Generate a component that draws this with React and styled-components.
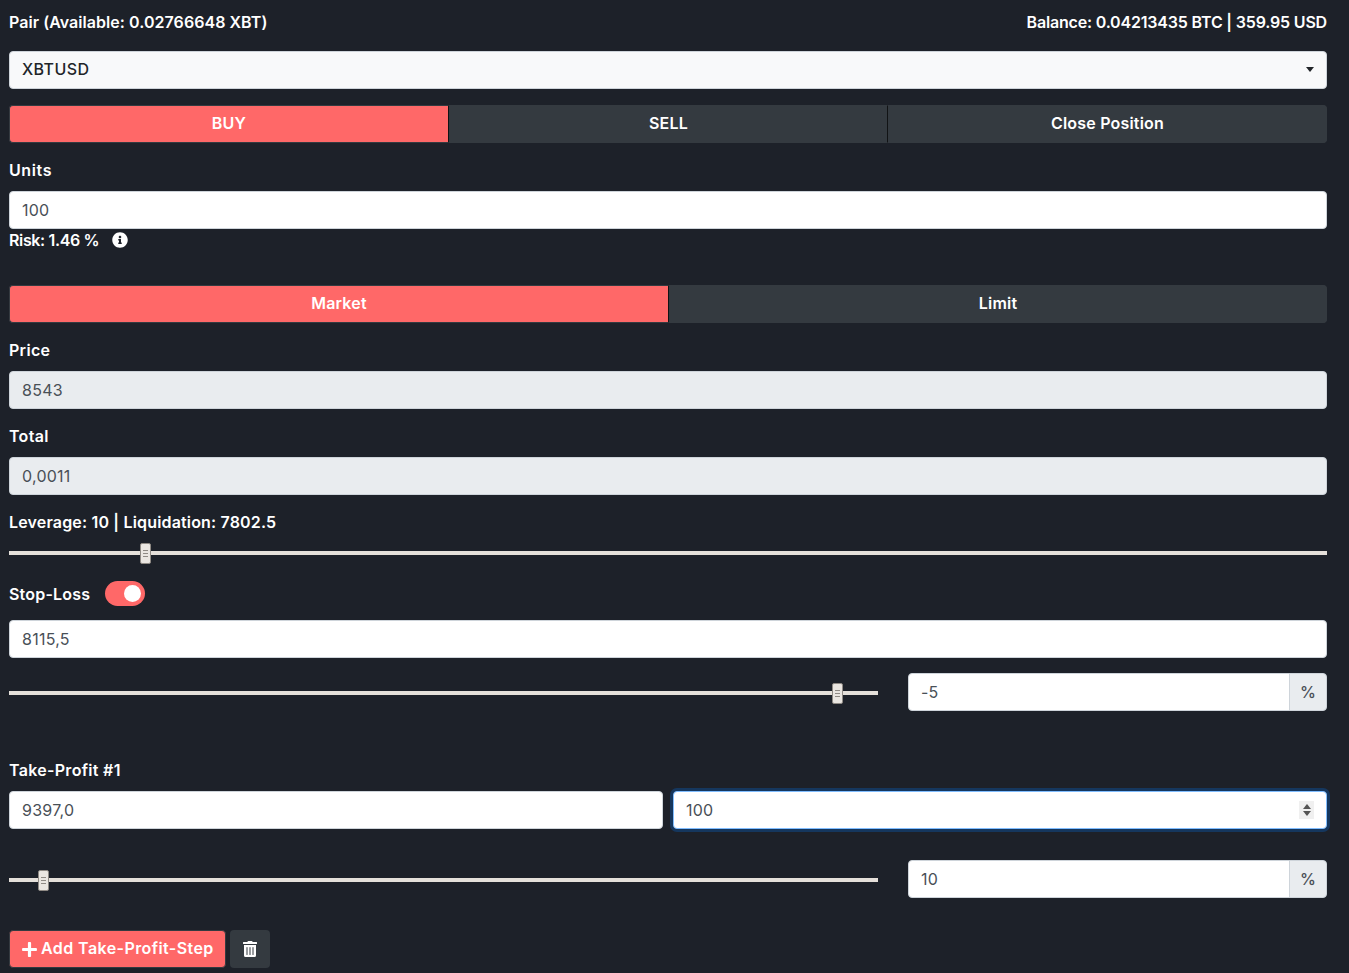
import React from "react";
import styled, { createGlobalStyle } from "styled-components";
import { FaInfoCircle, FaPlus, FaTrashAlt } from "react-icons/fa";

const GlobalStyle = createGlobalStyle`
  html, body {
    margin: 0;
    padding: 0;
    background: #1d2129;
  }
  * {
    box-sizing: border-box;
  }
  body {
    font-family: Inter, "Open Sans", sans-serif;
    font-size: 16px;
    line-height: 24px;
    color: #fff;
    overflow: hidden;
    height: 973px;
  }
`;

const Page = styled.div`
  padding: 10px 22px 0 9px;
`;

const Header = styled.div`
  display: flex;
  justify-content: space-between;
  height: 24px;
  margin-bottom: 17px;
  font-weight: 600;
`;

const HeaderText = styled.span`
  letter-spacing: ${(p) => p.$spacing}px;
`;

const Label = styled.div`
  font-weight: 600;
  letter-spacing: ${(p) => p.$spacing ?? 0.3}px;
  height: 24px;
  line-height: 22px;
  margin-bottom: 8px;
`;

const Field = styled.input`
  display: block;
  width: 100%;
  height: 38px;
  padding: 6px 12px;
  border: 1px solid #ced4da;
  border-radius: 4px;
  background: ${(p) => (p.disabled ? "#e9ecef" : "#fff")};
  color: #495057;
  opacity: 1;
  font: 400 16px/24px Inter, sans-serif;
  letter-spacing: 0.25px;
  margin-bottom: ${(p) => p.$mb ?? 16}px;
  outline: none;

  &:focus {
    border-color: #80bdff;
    box-shadow: 0 0 0 3px rgba(0, 123, 255, 0.25);
  }

  &::-webkit-inner-spin-button,
  &::-webkit-outer-spin-button {
    -webkit-appearance: none;
    margin: 0;
  }
`;

const SelectWrap = styled.div`
  position: relative;
  margin-bottom: 16px;

  &::after {
    content: "";
    position: absolute;
    top: 16px;
    right: 13px;
    border-top: 5px solid #212529;
    border-left: 4.5px solid transparent;
    border-right: 4.5px solid transparent;
  }
`;

const PairSelect = styled.select`
  display: block;
  width: 100%;
  height: 38px;
  padding: 4px 12px 6px;
  appearance: none;
  border: 1px solid #ced4da;
  border-radius: 4px;
  background-color: #f8f9fa;
  color: #212529;
  font: 500 16px/24px Inter, sans-serif;
  letter-spacing: 0.4px;
  outline: none;
`;

const Tabs = styled.div`
  display: grid;
  grid-template-columns: ${(p) => p.$cols};
  height: 38px;
  margin-bottom: 16px;
  background: #343a40;
  border-radius: 4px;
`;

const Tab = styled.button`
  border: 1px solid #343a40;
  border-right-color: #111315;
  margin: 0;
  padding: 0 0 2px;
  background: ${(p) => (p.$active ? "#ff6868" : "#343a40")};
  color: #fff;
  font: 600 16px/24px Inter, sans-serif;
  letter-spacing: 0.2px;
  border-radius: ${(p) => (p.$active ? "4px 0 0 4px" : "0")};

  &:last-child {
    border-right-color: #343a40;
    border-radius: 0 4px 4px 0;
  }
`;

const Risk = styled.div`
  display: flex;
  align-items: center;
  height: 24px;
  padding-bottom: 2px;
  margin-bottom: 32px;
  font-weight: 600;
  letter-spacing: -0.35px;

  svg {
    margin-left: 13px;
    width: 16px;
    height: 16px;
  }
`;

const SliderBox = styled.div`
  position: relative;
  height: 20px;
  display: flex;
  align-items: center;
  align-self: start;
  margin-top: ${(p) => p.$top ?? 0}px;
`;

const Track = styled.div`
  width: 100%;
  height: 4px;
  background: #e5e0da;
`;

const Thumb = styled.div`
  position: absolute;
  top: 0;
  left: ${(p) => p.$left}px;
  width: 11px;
  height: 21px;
  border: 1px solid #8f8a84;
  border-radius: 2px;
  background: #eae6e1;
  display: flex;
  flex-direction: column;
  align-items: center;
  justify-content: center;
  gap: 2px;

  i {
    display: block;
    width: 5px;
    height: 1px;
    background: #8f8a84;
  }
`;

const Slider = ({ left, top }) => (
  <SliderBox $top={top}>
    <Track />
    <Thumb $left={left}>
      <i />
      <i />
      <i />
    </Thumb>
  </SliderBox>
);

const ToggleRow = styled.div`
  display: flex;
  align-items: center;
  height: 25px;
  margin: 18px 0 14px;
  font-weight: 600;
  letter-spacing: 0.2px;
`;

const Toggle = styled.div`
  position: relative;
  width: 40px;
  height: 25px;
  margin-left: 15px;
  border-radius: 13px;
  background: #ff6868;

  &::after {
    content: "";
    position: absolute;
    top: 4px;
    right: 4px;
    width: 17px;
    height: 17px;
    border-radius: 50%;
    background: #fff;
  }
`;

const SliderRow = styled.div`
  display: grid;
  grid-template-columns: 1fr 419px;
  column-gap: 30px;
  margin-bottom: ${(p) => p.$mb}px;
`;

const InputGroup = styled.div`
  display: flex;
  height: 38px;
`;

const GroupInput = styled(Field)`
  flex: 1;
  min-width: 0;
  margin: 0;
  border-radius: 4px 0 0 4px;
`;

const GroupAddon = styled.div`
  width: 38px;
  margin-left: -1px;
  display: flex;
  align-items: center;
  justify-content: center;
  border: 1px solid #ced4da;
  border-radius: 0 4px 4px 0;
  background: #e9ecef;
  color: #495057;
  font-weight: 500;
`;

const PairRow = styled.div`
  display: grid;
  grid-template-columns: 1fr 1fr;
  column-gap: 10px;
  margin-bottom: 31px;
`;

const NumberWrap = styled.div`
  position: relative;
`;

const Spinner = styled.div`
  position: absolute;
  top: 10px;
  right: 13px;
  width: 15px;
  height: 18px;
  background: #f0f0f0;
  display: flex;
  flex-direction: column;
  align-items: center;
  justify-content: center;
  gap: 2px;
`;

const SpinArrow = styled.span`
  width: 0;
  height: 0;
  border-left: 4px solid transparent;
  border-right: 4px solid transparent;
  ${(p) => (p.$up ? "border-bottom" : "border-top")}: 5px solid #555;
`;

const Actions = styled.div`
  display: flex;
  align-items: center;
  gap: 4px;
`;

const AddButton = styled.button`
  display: flex;
  align-items: center;
  gap: 3px;
  height: 38px;
  width: 217px;
  padding: 0 0 2px 11px;
  border: 1px solid #343a40;
  border-radius: 4px;
  background: #ff6868;
  color: #fff;
  font: 600 16px/24px Inter, sans-serif;
  letter-spacing: 0.42px;
  white-space: nowrap;

  svg {
    margin-top: 2px;
  }
`;

const TrashButton = styled.button`
  display: flex;
  align-items: center;
  justify-content: center;
  width: 40px;
  height: 38px;
  padding: 0;
  border: none;
  border-radius: 4px;
  background: #343a40;
  color: #fff;
`;

export default function App() {
  return (
    <Page>
      <GlobalStyle />
      <Header>
        <HeaderText $spacing={0.05}>Pair (Available: 0.02766648 XBT)</HeaderText>
        <HeaderText $spacing={-0.18}>Balance: 0.04213435 BTC | 359.95 USD</HeaderText>
      </Header>
      <SelectWrap>
        <PairSelect defaultValue="XBTUSD">
          <option>XBTUSD</option>
        </PairSelect>
      </SelectWrap>
      <Tabs $cols="440px 439px 1fr">
        <Tab $active>BUY</Tab>
        <Tab>SELL</Tab>
        <Tab>Close Position</Tab>
      </Tabs>
      <Label $spacing={0.6}>Units</Label>
      <Field defaultValue="100" $mb={0} />
      <Risk>
        Risk: 1.46 %
        <FaInfoCircle />
      </Risk>
      <Tabs $cols="660px 1fr">
        <Tab $active>Market</Tab>
        <Tab>Limit</Tab>
      </Tabs>
      <Label>Price</Label>
      <Field defaultValue="8543" disabled />
      <Label>Total</Label>
      <Field defaultValue="0,0011" disabled />
      <Label $spacing={0.17}>Leverage: 10 | Liquidation: 7802.5</Label>
      <Slider left={131} />
      <ToggleRow>
        Stop-Loss
        <Toggle />
      </ToggleRow>
      <Field defaultValue="8115,5" $mb={15} />
      <SliderRow $mb={48}>
        <Slider left={823} top={10} />
        <InputGroup>
          <GroupInput defaultValue="-5" />
          <GroupAddon>%</GroupAddon>
        </InputGroup>
      </SliderRow>
      <Label>Take-Profit #1</Label>
      <PairRow>
        <Field defaultValue="9397,0" $mb={0} />
        <NumberWrap>
          <Field type="number" defaultValue="100" $mb={0} autoFocus />
          <Spinner>
            <SpinArrow $up />
            <SpinArrow />
          </Spinner>
        </NumberWrap>
      </PairRow>
      <SliderRow $mb={32}>
        <Slider left={29} top={10} />
        <InputGroup>
          <GroupInput defaultValue="10" />
          <GroupAddon>%</GroupAddon>
        </InputGroup>
      </SliderRow>
      <Actions>
        <AddButton>
          <FaPlus size={17} />
          Add Take-Profit-Step
        </AddButton>
        <TrashButton>
          <FaTrashAlt size={16} />
        </TrashButton>
      </Actions>
    </Page>
  );
}
